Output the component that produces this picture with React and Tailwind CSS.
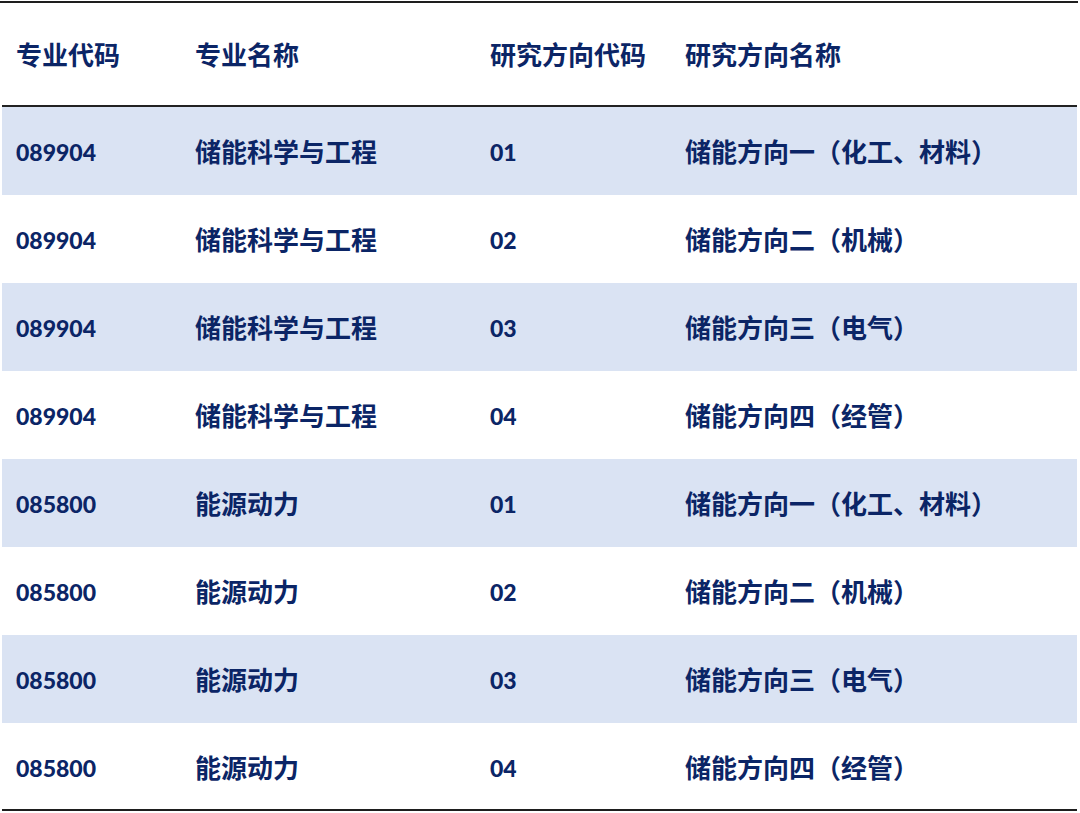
import React from "react";

const rows = [
  ["089904", "储能科学与工程", "01", "储能方向一（化工、材料）"],
  ["089904", "储能科学与工程", "02", "储能方向二（机械）"],
  ["089904", "储能科学与工程", "03", "储能方向三（电气）"],
  ["089904", "储能科学与工程", "04", "储能方向四（经管）"],
  ["085800", "能源动力", "01", "储能方向一（化工、材料）"],
  ["085800", "能源动力", "02", "储能方向二（机械）"],
  ["085800", "能源动力", "03", "储能方向三（电气）"],
  ["085800", "能源动力", "04", "储能方向四（经管）"],
];

const cjk = "font-['Noto_Sans_CJK_SC',sans-serif] font-bold text-[26px] leading-none";
const num = "font-['Lato','Noto_Sans_CJK_SC',sans-serif] font-black text-[23px] leading-none pt-[2px]";

export default function App() {
  return (
    <div className="w-[1080px] h-[813px] bg-white text-[#0b2566] pt-px">
      <div className="w-[1078px] h-[2px] bg-[#1e1e1e]" />
      <div className="ml-[2px] w-[1075px]">
        <div className="grid grid-cols-[179px_295px_195px_1fr] h-[104px] items-center border-b-2 border-[#222]">
          <div className={`pl-[14px] ${cjk}`}>专业代码</div>
          <div className={`pl-[14px] ${cjk}`}>专业名称</div>
          <div className={`pl-[14px] ${cjk}`}>研究方向代码</div>
          <div className={`pl-[14px] ${cjk}`}>研究方向名称</div>
        </div>
        {rows.map((r, i) => (
          <div
            key={i}
            className={`grid grid-cols-[179px_295px_195px_1fr] h-[88px] items-center ${i % 2 === 0 ? "bg-[#dae3f3]" : "bg-white"}`}
          >
            <div className={`pl-[14px] ${num}`}>{r[0]}</div>
            <div className={`pl-[14px] ${cjk}`}>{r[1]}</div>
            <div className={`pl-[14px] ${num}`}>{r[2]}</div>
            <div className={`pl-[14px] ${cjk}`}>{r[3]}</div>
          </div>
        ))}
        <div className="h-[2px] -mt-[2px] bg-[#1e1e1e]" />
      </div>
    </div>
  );
}
